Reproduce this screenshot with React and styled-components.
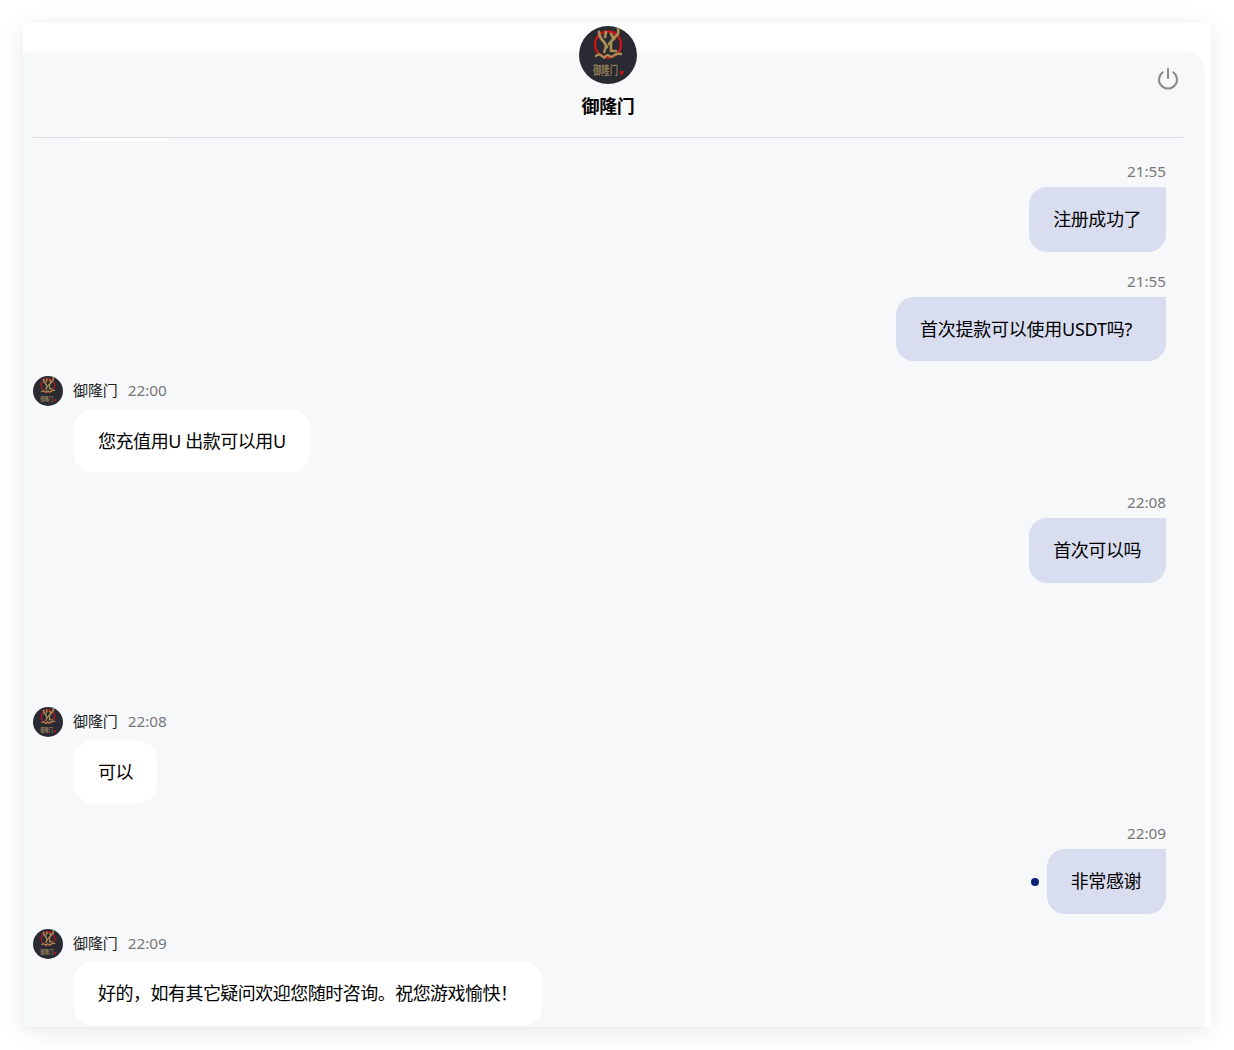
import React from "react";
import styled, { createGlobalStyle } from "styled-components";

const GlobalStyle = createGlobalStyle`
  html, body {
    margin: 0;
    padding: 0;
    background: #ffffff;
  }
  body {
    font-family: "Noto Sans", "Noto Sans CJK SC", sans-serif;
  }
`;

const Page = styled.div`
  width: 1234px;
  height: 1050px;
  padding: 23px;
  box-sizing: border-box;
  overflow: hidden;
`;

const Shell = styled.div`
  width: 1188px;
  height: 1004px;
  padding: 31px 8px 0 0;
  box-sizing: border-box;
  background: #ffffff;
  box-shadow: 0 4px 24px rgba(0, 0, 0, 0.09);
`;

const Panel = styled.div`
  position: relative;
  height: 973px;
  padding: 0 10px;
  background: #f7f8fa;
  border-radius: 0 15px 0 0;
  box-shadow: 0 -1px 4px rgba(0, 0, 0, 0.03), 1px 0 3px rgba(0, 0, 0, 0.03);
`;

const Header = styled.header`
  height: 83px;
  margin-right: 10px;
  border-bottom: 1px solid #dcdde0;
  display: flex;
  flex-direction: column;
  align-items: center;
`;

const HeaderLogo = styled.div`
  width: 58px;
  height: 58px;
  margin-top: -28px;
`;

const Title = styled.div`
  margin-top: 9px;
  font-size: 18px;
  line-height: 26px;
  font-weight: 700;
  letter-spacing: -0.3px;
  color: #000000;
`;

const PowerButton = styled.button`
  position: absolute;
  top: 12px;
  right: 23px;
  width: 24px;
  height: 24px;
  padding: 0;
  border: 0;
  background: none;
  color: #8a8a8a;
`;

const Messages = styled.div`
  display: flex;
  flex-direction: column;
`;

/* bottom edge of an older bubble, scrolled away under the header */
const ScrolledBubble = styled.div`
  width: 88px;
  height: 3px;
  margin-left: 47px;
  background: #ffffff;
  border-radius: 0 0 10px 10px;
`;

const OutRow = styled.div`
  display: flex;
  flex-direction: column;
  align-items: flex-end;
  margin-top: ${(p) => p.$top}px;
  padding-right: 27px;
`;

const Stamp = styled.span`
  font-size: 15.3px;
  line-height: 20px;
  color: #777777;
`;

const OutLine = styled.div`
  display: flex;
  align-items: center;
  gap: 8px;
  margin-top: 6px;
`;

const Bubble = styled.div`
  padding: 0 ${(p) => p.$right}px 3px 24px;
  box-sizing: border-box;
  height: ${(p) => p.$h}px;
  display: flex;
  align-items: center;
  font-size: 18px;
  letter-spacing: ${(p) => p.$spacing ?? -0.45}px;
  color: #000000;
  white-space: nowrap;
  background: ${(p) => (p.$out ? "#d9ddf0" : "#ffffff")};
  border-radius: ${(p) => (p.$out ? "18px 0 18px 18px" : "18px")};
`;

const Dot = styled.span`
  width: 8px;
  height: 8px;
  border-radius: 50%;
  background: #0a2175;
`;

const InRow = styled.div`
  display: flex;
  flex-direction: column;
  align-items: flex-start;
  margin-top: ${(p) => p.$top}px;
`;

const InMeta = styled.div`
  display: flex;
  align-items: center;
  gap: 10px;
  height: 30px;
`;

const SmallLogo = styled.div`
  width: 30px;
  height: 30px;
`;

const Name = styled.span`
  font-size: 15px;
  line-height: 20px;
  letter-spacing: -0.1px;
  color: #222222;
  margin-bottom: 3px;
`;

const InStamp = styled(Stamp)`
  margin-bottom: 3px;
`;

const InBody = styled.div`
  margin: ${(p) => p.$gap}px 0 0 41px;
`;

const Logo = () => (
  <svg viewBox="0 0 58 58" width="100%" height="100%" style={{ display: "block" }}>
    <circle cx="29" cy="29" r="29" fill="#2a2a33" />
    <circle cx="29" cy="18.5" r="13" fill="none" stroke="#c8141a" strokeWidth="2.4" />
    <path
      d="M20 6c0 4 2 7 5 10l3 5M27 6l-1 5M39 3c1 3 0 6-3 8l-6 7M32 8l3 5"
      fill="none"
      stroke="#a88d55"
      strokeWidth="2.8"
      strokeLinecap="round"
    />
    <path d="M27 20l-2 7M32 16v9h6" fill="none" stroke="#a88d55" strokeWidth="2.6" />
    <path
      d="M17 30c3-3 5-1 7 1s3-3 5-2 3 3 5 1 4-3 8-2"
      fill="none"
      stroke="#a88d55"
      strokeWidth="2.4"
      strokeLinecap="round"
    />
    <text
      x="14"
      y="49"
      fontSize="12"
      fontWeight="700"
      fill="#8d7b55"
      textLength="25"
      lengthAdjust="spacingAndGlyphs"
      fontFamily="Noto Sans CJK SC, sans-serif"
    >
      御隆门
    </text>
    <rect x="41" y="45" width="3.5" height="3.5" fill="#c8141a" />
  </svg>
);

const PowerIcon = () => (
  <svg viewBox="0 0 24 24" width="24" height="24" fill="none" stroke="currentColor" strokeWidth="2" strokeLinecap="round">
    <path d="M12 3v9" />
    <path d="M6.8 6.2a9 9 0 1 0 10.4 0" />
  </svg>
);

const messages = [
  { out: true, time: "21:55", text: "注册成功了", top: 20, h: 65, right: 25 },
  { out: true, time: "21:55", text: "首次提款可以使用USDT吗?", top: 19, h: 64, right: 34, spacing: -0.25 },
  { out: false, time: "22:00", text: "您充值用U 出款可以用U", top: 15, h: 62, gap: 4, right: 24 },
  { out: true, time: "22:08", text: "首次可以吗", top: 20, h: 65, right: 25 },
  { out: false, time: "22:08", text: "可以", top: 124, h: 62, gap: 4, right: 24 },
  { out: true, time: "22:09", text: "非常感谢", top: 20, h: 65, right: 25, pending: true },
  { out: false, time: "22:09", text: "好的，如有其它疑问欢迎您随时咨询。祝您游戏愉快！", top: 15, h: 63, gap: 3, right: 24, spacing: -0.52 },
];

const App = () => {
  return (
    <Page>
      <GlobalStyle />
      <Shell>
        <Panel>
          <Header>
            <HeaderLogo>
              <Logo />
            </HeaderLogo>
            <Title>御隆门</Title>
          </Header>
          <PowerButton aria-label="退出">
            <PowerIcon />
          </PowerButton>
          <Messages>
            <ScrolledBubble />
            {messages.map((m, index) =>
              m.out ? (
                <OutRow key={index} $top={m.top}>
                  <Stamp>{m.time}</Stamp>
                  <OutLine>
                    {m.pending && <Dot />}
                    <Bubble $out $h={m.h} $right={m.right} $spacing={m.spacing}>{m.text}</Bubble>
                  </OutLine>
                </OutRow>
              ) : (
                <InRow key={index} $top={m.top}>
                  <InMeta>
                    <SmallLogo>
                      <Logo />
                    </SmallLogo>
                    <Name>御隆门</Name>
                    <InStamp>{m.time}</InStamp>
                  </InMeta>
                  <InBody $gap={m.gap}>
                    <Bubble $h={m.h} $right={m.right} $spacing={m.spacing}>{m.text}</Bubble>
                  </InBody>
                </InRow>
              )
            )}
          </Messages>
        </Panel>
      </Shell>
    </Page>
  );
};

export default App;
